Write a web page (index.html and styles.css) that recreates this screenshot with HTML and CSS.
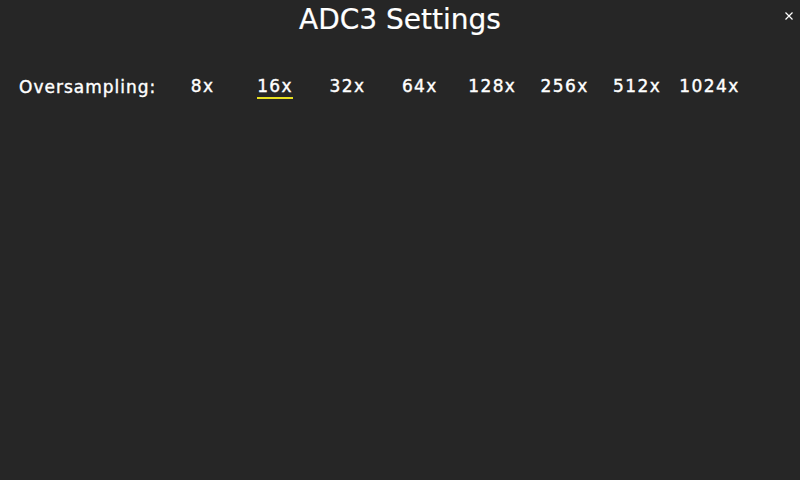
FILE: index.html
```html
<!DOCTYPE html>
<html>
<head>
<meta charset="utf-8">
<link rel="stylesheet" href="styles.css">
</head>
<body>
<div class="screen">
  <header class="titlebar">
    <h1 class="title">ADC3 Settings</h1>
    <button class="close" aria-label="Close">
      <svg width="8" height="8" viewBox="0 0 8 8"><path d="M0.5 0.5L7.5 7.5M7.5 0.5L0.5 7.5" stroke="#fff" stroke-width="1.2"/></svg>
    </button>
  </header>
  <div class="row">
    <span class="label">Oversampling:</span>
    <div class="options">
      <span class="opt">8x</span>
      <span class="opt"><span class="sel">16x</span></span>
      <span class="opt">32x</span>
      <span class="opt">64x</span>
      <span class="opt">128x</span>
      <span class="opt">256x</span>
      <span class="opt">512x</span>
      <span class="opt">1024x</span>
    </div>
  </div>
</div>
</body>
</html>
```
FILE: styles.css
```css
html, body {
  margin: 0;
  padding: 0;
  background: #262626;
}
.screen {
  width: 800px;
  height: 480px;
  background: #262626;
  color: #fff;
  font-family: "DejaVu Sans", sans-serif;
  position: relative;
  overflow: hidden;
}
.titlebar {
  height: 42px;
  display: flex;
  justify-content: center;
  align-items: flex-start;
}
.title {
  margin: 3px 0 0 0;
  font-size: 28px;
  font-weight: normal;
  line-height: 34px;
  -webkit-text-stroke: 0.2px #fff;
}
.close {
  position: absolute;
  top: 12px;
  right: 7px;
  width: 8px;
  height: 8px;
  padding: 0;
  border: 0;
  background: none;
  display: block;
}
.close svg { display: block; }
.row {
  display: flex;
  align-items: center;
  padding: 33px 0 0 19px;
  font-size: 17px;
  letter-spacing: 1px;
  line-height: 22px;
  -webkit-text-stroke: 0.4px #fff;
}
.label {
  width: 146px;
}
.options {
  display: flex;
  letter-spacing: 1.4px;
  padding-left: 1.5px;
}
.opt {
  width: 72.4px;
  text-align: center;
}
.sel {
  display: inline-block;
  border-bottom: 2px solid #e8e020;
  padding-bottom: 1px;
  line-height: 20px;
}
```
